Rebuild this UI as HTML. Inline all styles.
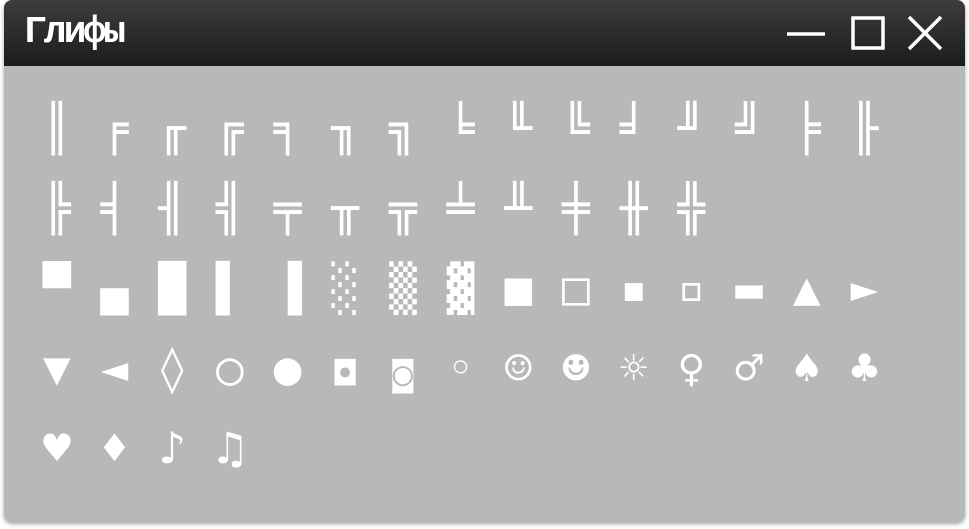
<!DOCTYPE html>
<html><head><meta charset="utf-8"><style>
html,body{margin:0;padding:0;background:#fff;width:969px;height:529px;overflow:hidden}
.win{position:absolute;left:4px;top:0;width:961px;height:522px;border-radius:8px;background:#b8b8b8;overflow:hidden;box-shadow:0 2px 4px rgba(0,0,0,.35)}
.tb{position:absolute;left:0;top:0;width:100%;height:66px;background:linear-gradient(#3e3c3d,#1c1c1c)}
.t{position:absolute;left:20px;top:11px;color:#fff;font:bold 38px "Liberation Mono",monospace;letter-spacing:-3px}
.g{position:absolute;left:24px;top:88px;color:#fff;font:46px/80px "DejaVu Sans Mono","DejaVu Sans",monospace}
.r{height:80px;white-space:nowrap}
.r span{display:inline-block;width:57.7px;text-align:center;vertical-align:top;height:80px}
.s{font-size:34px;position:relative;top:6px}
</style></head><body>
<div class="win">
<div class="tb"><div class="t">Глифы</div>
<svg width="969" height="66" style="position:absolute;left:-4px;top:0" stroke="#fff" stroke-width="3.5" fill="none">
<line x1="787" y1="34" x2="825" y2="34"/>
<rect x="853" y="18" width="30" height="30"/>
<line x1="909" y1="17" x2="941" y2="49"/><line x1="941" y1="17" x2="909" y2="49"/>
</svg></div>
<div class="g">
<div class="r"><span>║</span><span>╒</span><span>╓</span><span>╔</span><span>╕</span><span>╖</span><span>╗</span><span>╘</span><span>╙</span><span>╚</span><span>╛</span><span>╜</span><span>╝</span><span>╞</span><span>╟</span></div>
<div class="r"><span>╠</span><span>╡</span><span>╢</span><span>╣</span><span>╤</span><span>╥</span><span>╦</span><span>╧</span><span>╨</span><span>╪</span><span>╫</span><span>╬</span></div>
<div class="r"><span>▀</span><span>▄</span><span>█</span><span>▌</span><span>▐</span><span>░</span><span>▒</span><span>▓</span><span>■</span><span>□</span><span>▪</span><span>▫</span><span>▬</span><span>▲</span><span>►</span></div>
<div class="r"><span>▼</span><span>◄</span><span>◊</span><span>○</span><span>●</span><span class="s">◘</span><span class="s">◙</span><span>◦</span><span>☺</span><span>☻</span><span>☼</span><span>♀</span><span>♂</span><span>♠</span><span>♣</span></div>
<div class="r"><span>♥</span><span>♦</span><span>♪</span><span>♫</span></div>
</div>
</div>
</body></html>
